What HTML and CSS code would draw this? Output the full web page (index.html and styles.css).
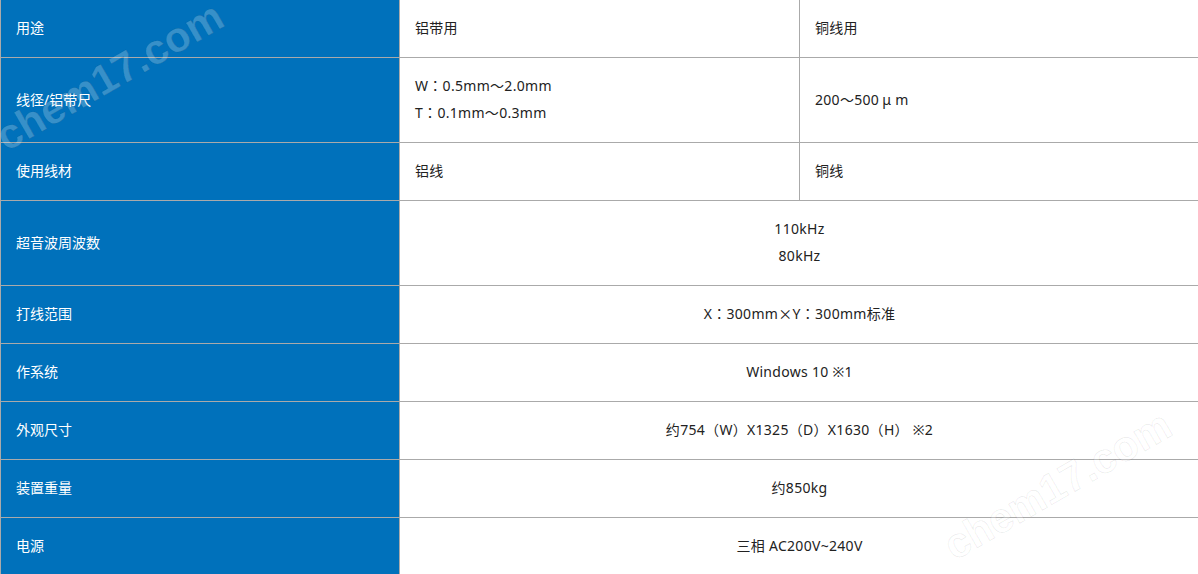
FILE: index.html
```html
<!DOCTYPE html>
<html lang="ja">
<head>
<meta charset="utf-8">
<title>规格</title>
<link rel="stylesheet" href="styles.css">
</head>
<body>
<div class="wrap">
<table class="spec">
  <colgroup><col class="c1"><col class="c2"><col class="c3"></colgroup>
  <tr class="first"><th>用途</th><td>铝带用</td><td>铜线用</td></tr>
  <tr><th>线径/铝带尺</th><td>W：0.5mm～2.0mm<br>T：0.1mm～0.3mm</td><td>200～500<span class="mu">μ</span>m</td></tr>
  <tr><th>使用线材</th><td>铝线</td><td>铜线</td></tr>
  <tr><th>超音波周波数</th><td colspan="2" class="center">110kHz<br>80kHz</td></tr>
  <tr><th>打线范围</th><td colspan="2" class="center">X：300mm<span class="jp">×</span>Y：300mm标准</td></tr>
  <tr><th>作系统</th><td colspan="2" class="center">Windows 10 ※1</td></tr>
  <tr><th>外观尺寸</th><td colspan="2" class="center">约754（W）X1325（D）X1630（H） ※2</td></tr>
  <tr><th>装置重量</th><td colspan="2" class="center">约850kg</td></tr>
  <tr><th>电源</th><td colspan="2" class="center">三相 AC200V~240V</td></tr>
</table>
<div class="mark mark1">chem17.com</div>
<div class="mark mark2">chem17.com</div>
</div>
</body>
</html>
```
FILE: styles.css
```css
html, body {
  margin: 0;
  padding: 0;
  background: #fff;
  overflow: hidden;
}
.wrap {
  position: relative;
  width: 1198px;
  height: 574px;
  overflow: hidden;
}
.spec {
  border-collapse: collapse;
  table-layout: fixed;
  width: 1199px;
  font-family: "Noto Sans", "Noto Sans CJK JP", sans-serif;
  font-size: 14px;
  line-height: 27px;
  color: #222;
}
.c1 { width: 399px; }
.c2 { width: 400px; }
.c3 { width: 400px; }
.spec th, .spec td {
  border: 1px solid #aaa;
  padding: 14px 15px 16px;
  text-align: left;
  vertical-align: middle;
  font-weight: normal;
}
.spec td {
  letter-spacing: 0.3px;
}
.spec th {
  background: #0071bb;
  color: #fff;
}
.spec tr.first th, .spec tr.first td {
  border-top: none;
}
.spec td.center {
  text-align: center;
}
.jp {
  font-family: "Noto Sans CJK JP", sans-serif;
}
.mu {
  display: inline-block;
  margin: 0 4px 0 3px;
}
.mark {
  position: absolute;
  font-family: "Liberation Sans", sans-serif;
  font-weight: bold;
  font-size: 42px;
  line-height: 42px;
  color: rgba(255, 255, 255, 0.22);
  -webkit-text-stroke: 1px rgba(0, 0, 0, 0.07);
  transform: rotate(-30deg);
  transform-origin: left bottom;
  white-space: nowrap;
  pointer-events: none;
}
.mark1 { left: 10px; top: 116px; }
.mark2 { left: 958px; top: 525px; }
```
